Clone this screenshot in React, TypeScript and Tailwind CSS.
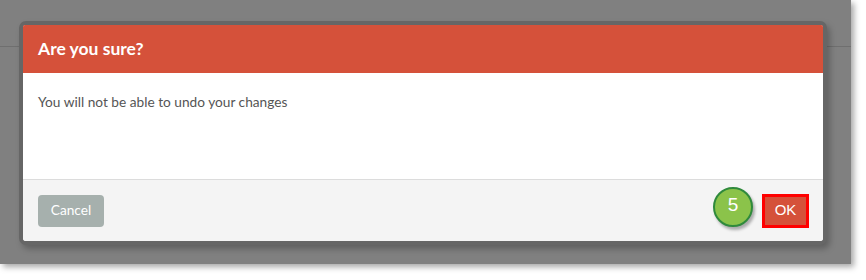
export default function App() {
  return (
    <div className="w-[866px] h-[280px] bg-white relative overflow-hidden font-['Lato','Liberation_Sans',sans-serif]">
      {/* backdrop */}
      <div className="w-[851px] h-[264px] bg-[#808080] shadow-[3px_3px_6px_rgba(0,0,0,0.35)]">
        <div className="h-[47px] border-b border-[#6f6f6f]" />
      </div>

      {/* modal */}
      <div className="absolute left-[23px] top-[25px] w-[800px] h-[216px] flex flex-col rounded-[3px] bg-white shadow-[0_0_0_4px_#666,3px_4px_6px_4px_rgba(0,0,0,0.25)]">
        <div className="h-[48px] bg-[#d5513a] flex items-center px-[15px] rounded-t-[2px]">
          <h2 className="text-white text-[17.5px] font-bold leading-none">Are you sure?</h2>
        </div>
        <div className="h-[106px] px-[15px] pt-[19px] text-[13.7px] text-[#555]">
          You will not be able to undo your changes
        </div>
        <div className="flex-1 bg-[#f4f4f4] border-t border-[#dcdcdc] flex items-center justify-between px-[15px] rounded-b-[3px]">
          <button className="h-[32px] w-[66px] rounded-[4px] bg-[#a6b0ad] text-white text-[13.7px]">
            Cancel
          </button>
          <div className="flex items-center gap-[9px] mr-[-1px]">
            <div className="w-[40px] h-[40px] rounded-full bg-[#8bc34a] border-2 border-[#2f8a3c] shadow-[2px_3px_3px_rgba(0,0,0,0.3)] flex items-center justify-center text-white text-[19px] font-['Liberation_Sans',sans-serif] pb-[3px] mt-[-8px]">
              5
            </div>
            <div className="w-[47px] h-[34px] border-[3px] border-[#ff0000] bg-[#d5513a] flex items-center justify-center text-white text-[15px] font-['Liberation_Sans',sans-serif]">
              OK
            </div>
          </div>
        </div>
      </div>
    </div>
  );
}
